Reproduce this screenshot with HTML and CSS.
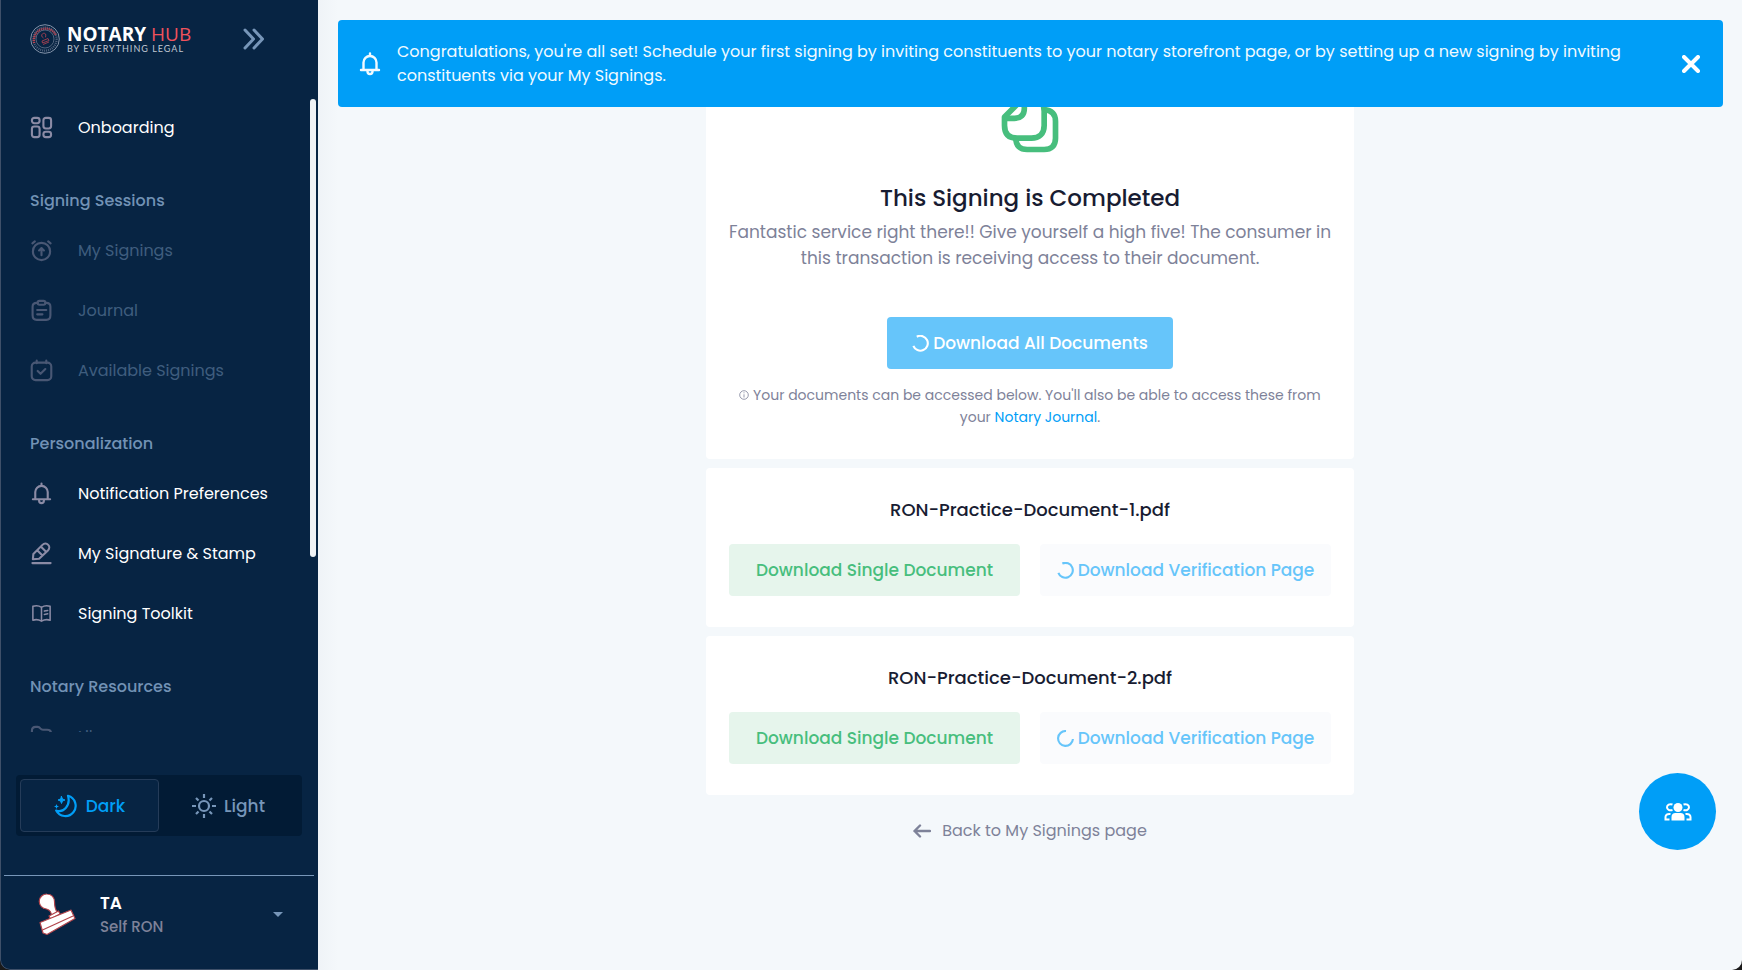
FILE: index.html
```html
<!DOCTYPE html>
<html lang="en">
<head>
    <meta charset="UTF-8">
    <meta name="viewport" content="width=device-width, initial-scale=1.0">
    <title>Notary Hub</title>
    <link rel="stylesheet" href="styles.css">
</head>
<body>
    <div class="app">
        <aside class="sidebar">
            <div class="sidebar-header">
                <a href="#" class="logo">
                    <svg class="logo-seal" viewBox="0 0 30 30" fill="none">
                        <circle cx="15" cy="15" r="14.3" stroke="#8292a8" stroke-width="1"/>
                        <circle cx="15" cy="15" r="11.6" stroke="#50627d" stroke-width="2.2" stroke-dasharray="1 1"/>
                        <path d="M4.2 19A11.6 11.6 0 0 1 25.8 11" stroke="#b84452" stroke-width="2.4" stroke-dasharray="1.2 .8"/>
                        <circle cx="15" cy="15" r="9" stroke="#63738a" stroke-width=".8"/>
                        <path d="M13.500 14c-2-1-2.500-3-1-4.200s3.500-.3 3.300 1.300l-.3 2.200M12 17l6-2.500 1 2-6.500 2.500zM13 20.500l6-2.500" stroke="#b84452" stroke-width=".8"/>
                    </svg>
                    <span class="logo-text">
                        <span class="logo-name"><b>NOTARY</b> <span class="logo-hub">HUB</span></span>
                        <span class="logo-tagline">BY EVERYTHING LEGAL</span>
                    </span>
                </a>
                <button class="collapse-btn" aria-label="Collapse menu">
                    <svg width="22" height="22" viewBox="0 0 22 22" fill="none" stroke="currentColor" stroke-width="3" stroke-linecap="round" stroke-linejoin="round">
                        <path d="M2 2l8.500 9L2 20M11 2l8.500 9-8.500 9"/>
                    </svg>
                </button>
            </div>

            <div class="menu-wrap">
                <nav class="menu">
                    <a href="#" class="menu-item">
                        <svg class="icon" viewBox="0 0 24 24"><rect x="2" y="2" width="8" height="5.500" rx="2.500"/><rect x="14" y="2" width="8" height="11" rx="2.500"/><rect x="2" y="11" width="8" height="11" rx="2.500"/><rect x="14" y="16.500" width="8" height="5.500" rx="2.500"/></svg>
                        Onboarding
                    </a>

                    <h2 class="menu-title">Signing Sessions</h2>
                    <a href="#" class="menu-item disabled">
                        <svg class="icon" viewBox="0 0 24 24"><circle cx="12" cy="13" r="9"/><path d="M12 17v-6M9.500 12L12 9.500l2.500 2.500M2.500 4.500l2.500-2M21.500 4.500l-2.500-2"/></svg>
                        My Signings
                    </a>
                    <a href="#" class="menu-item disabled">
                        <svg class="icon" viewBox="0 0 24 24"><path d="M8 4H7C4 4 2.700 5.500 2.700 8v9c0 3 1.300 4.800 4.300 4.800h10c3 0 4.300-1.800 4.300-4.800V8c0-2.500-1.300-4-4.300-4h-1"/><rect x="8" y="2" width="8" height="4" rx="1.800"/><path d="M7.500 11.500h9.500M7.500 16h5.500"/></svg>
                        Journal
                    </a>
                    <a href="#" class="menu-item disabled">
                        <svg class="icon" viewBox="0 0 24 24"><rect x="1.800" y="3.800" width="20.400" height="18.200" rx="4"/><path d="M7 1.500v3M17 1.500v3M8 12.500l3 3 5-5"/></svg>
                        Available Signings
                    </a>

                    <h2 class="menu-title">Personalization</h2>
                    <a href="#" class="menu-item">
                        <svg class="icon" viewBox="0 0 24 24"><path d="M12 1.500v2M5.500 18v-7.500a6.500 6.500 0 0 1 13 0V18M3 18h18M9.500 18.500v1a2.500 2.500 0 0 0 5 0v-1"/></svg>
                        Notification Preferences
                    </a>
                    <a href="#" class="menu-item">
                        <svg class="icon" viewBox="0 0 24 24"><path d="M3 18l.5-5.500L13 3c2-2 4.500-1.500 6 0s1.500 4-.3 5.800L9.500 17.500zM7.500 8.500l5.500 5.500M11.500 5l5 5M2.500 22h19"/></svg>
                        My Signature &amp; Stamp
                    </a>
                    <a href="#" class="menu-item">
                        <svg class="icon icon-thin" viewBox="0 0 24 24"><path d="M12 5.500C9.500 3.800 6 3.500 3 4.500V19c3-1 6.500-.5 9 1 2.500-1.500 6-2 9-1V4.500c-3-1-6.500-.7-9 1zM12 5.500V20M15 9.500l3.500-.7M15 13l3.500-.7"/></svg>
                        Signing Toolkit
                    </a>

                    <h2 class="menu-title">Notary Resources</h2>
                    <a href="#" class="menu-item disabled">
                        <svg class="icon" viewBox="0 0 24 24"><path d="M2 18V6c0-3 1-4 4-4h2c1.500 0 2 .5 2.700 1.500.8 1 1.300 1.500 2.800 1.500H18c3 0 4 1.500 4 4v9c0 3-1 4-4 4H6c-3 0-4-1-4-4z"/></svg>
                        Library
                    </a>
                </nav>
                <div class="menu-scroll"></div>
            </div>

            <div class="theme-switch">
                <button class="theme-btn active">
                    <svg width="24" height="24" viewBox="0 0 24 24" fill="none" stroke="currentColor" stroke-width="2.200" stroke-linecap="round" stroke-linejoin="round">
                        <path d="M14 1.800A10.300 10.300 0 1 1 2.200 16.500C9 19 17 12 14 1.800z"/>
                        <path d="M7.500 2.500l1 2.500 2.500 1-2.500 1-1 2.500-1-2.500L4 6l2.500-1z" fill="currentColor" stroke-width="1"/>
                        <path d="M2.500 10l.7 1.800L5 12.500l-1.800.7-.7 1.800-.7-1.800L0 12.500l1.800-.7z" fill="currentColor" stroke="none"/>
                    </svg>
                    Dark
                </button>
                <button class="theme-btn">
                    <svg width="24" height="24" viewBox="0 0 24 24" fill="none" stroke="currentColor" stroke-width="2.200">
                        <circle cx="12" cy="12" r="5"/>
                        <path d="M12 0v4M12 20v4M0 12h4M20 12h4M4 4l2.500 2.500M17.500 17.500L20 20M20 4l-2.500 2.500M4 20l2.500-2.500"/>
                    </svg>
                    Light
                </button>
            </div>

            <button class="profile">
                <svg class="avatar" viewBox="0 0 38 44" fill="#fff" stroke="#b2444b" stroke-width="1.200" stroke-linejoin="round">
                    <path d="M9 1a7.500 7.500 0 0 1 7.500 7.500c0 4 .5 8 3 11l-6 3.500c0-4-1.500-6-5-7A7.500 7.500 0 0 1 9 1z"/>
                    <path d="M11 23l9.500-5 1.500 3-9.500 5z"/>
                    <path d="M2 29.500L33 17l4 8.500L9 41.500l-4-1.500z"/>
                    <path d="M4.500 37l30.500-14" fill="none"/>
                </svg>
                <span class="profile-info">
                    <span class="profile-name">TA</span>
                    <span class="profile-role">Self RON</span>
                </span>
                <span class="caret"></span>
            </button>
        </aside>

        <main class="content">
            <div class="toast" role="alert">
                <svg class="toast-icon" viewBox="0 0 24 24"><path d="M12 1.500v2M5.500 18v-7.500a6.500 6.500 0 0 1 13 0V18M3 18h18M9.500 18.500v1a2.500 2.500 0 0 0 5 0v-1"/></svg>
                <p>Congratulations, you're all set! Schedule your first signing by inviting constituents to your notary storefront page, or by setting up a new signing by inviting constituents via your My Signings.</p>
                <button class="toast-close" aria-label="Close">
                    <svg width="18" height="18" viewBox="0 0 18 18" fill="none" stroke="currentColor" stroke-width="4" stroke-linecap="round"><path d="M2 2l14 14M16 2L2 16"/></svg>
                </button>
            </div>

            <section class="card">
                <svg class="done-icon" viewBox="0 0 24 24" fill="none" stroke="currentColor" stroke-width="2" stroke-linejoin="round">
                    <path d="M17 8v4.500c0 3-1.800 4.500-4.500 4.500h-5C4.500 17 3 15.500 3 12.500V9.500L9.500 3h3C15.500 3 17 4.500 17 7.500z"/>
                    <path d="M10 3v3.500c0 2.200-1.200 3.500-3.500 3.500H3"/>
                    <path d="M17 7c2.700 0 4 1.500 4 4v6c0 2.700-1.500 4-4 4h-6c-2.500 0-4-1.300-4-4"/>
                </svg>
                <h1>This Signing is Completed</h1>
                <p class="card-text">Fantastic service right there!! Give yourself a high five! The consumer in this transaction is receiving access to their document.</p>
                <button class="btn btn-primary" disabled>
                    <svg class="spinner" viewBox="0 0 16 16"><path d="M4.500 1.600A7 7 0 1 1 1.300 10.200"/></svg>
                    Download All Documents
                </button>
                <p class="card-note">
                    <svg class="info" viewBox="0 0 10 10"><circle cx="5" cy="5" r="4.300"/><path d="M5 4.300V7.500M5 2.300v1"/></svg>
                    Your documents can be accessed below. You'll also be able to access these from your <a href="#">Notary Journal</a>.
                </p>
            </section>

            <section class="card">
                <h2>RON-Practice-Document-1.pdf</h2>
                <div class="btn-row">
                    <button class="btn btn-success">Download Single Document</button>
                    <button class="btn btn-light" disabled>
                        <svg class="spinner" viewBox="0 0 16 16"><path d="M5 1.400A7 7 0 1 1 1.300 10.200"/></svg>
                        Download Verification Page
                    </button>
                </div>
            </section>

            <section class="card">
                <h2>RON-Practice-Document-2.pdf</h2>
                <div class="btn-row">
                    <button class="btn btn-success">Download Single Document</button>
                    <button class="btn btn-light" disabled>
                        <svg class="spinner" viewBox="0 0 16 16"><path d="M8.500 1A7 7 0 1 0 15 8.500"/></svg>
                        Download Verification Page
                    </button>
                </div>
            </section>

            <a href="#" class="back-link">
                <svg width="18" height="14" viewBox="0 0 18 14" fill="none" stroke="currentColor" stroke-width="2.400" stroke-linecap="round" stroke-linejoin="round"><path d="M17 7H1.500M7 1.500L1.500 7 7 12.500"/></svg>
                Back to My Signings page
            </a>

            <button class="chat-btn" aria-label="Participants">
                <svg width="28" height="20" viewBox="0 0 28 20" fill="#fff">
                    <circle cx="14" cy="5.500" r="4.500"/>
                    <path d="M7.500 18.500V15c0-2.500 1.500-4 4-4h5c2.500 0 4 1.500 4 4v3.500z"/>
                    <g fill="none" stroke="#fff" stroke-width="2">
                        <path d="M8.500 2.500C5.500 1.500 3 3 3 5.300S5.500 9 8.500 8M19.500 2.500c3-1 5.500.5 5.500 2.800S22.500 9 19.500 8"/>
                        <path d="M6.500 12C3 11.500 1.500 13 1.500 15v2.500h4M21.500 12c3.500-.5 5 1 5 3v2.500h-4"/>
                    </g>
                </svg>
            </button>
        </main>
    </div>
</body>
</html>
```
FILE: styles.css
```css
* {
    box-sizing: border-box;
}
body {
    margin: 0;
    background-color: #1a1a1a;
    font-family: Poppins, Inter, sans-serif;
    font-size: 16px;
    color: #181c32;
}
h1, h2, p {
    margin: 0;
}
a {
    color: #009ef7;
    text-decoration: none;
}
button {
    border: none;
    padding: 0;
    background: none;
    font-family: inherit;
    font-size: inherit;
    cursor: pointer;
}
svg {
    display: block;
    flex-shrink: 0;
}
.app {
    display: flex;
    min-height: 100vh;
    border-radius: 0 0 10px 10px;
    overflow: hidden;
}

/* Sidebar */
.sidebar {
    display: flex;
    flex-direction: column;
    flex-shrink: 0;
    width: 318px;
    height: 100vh;
    background-color: #072443;
    border-left: 1px solid #3f5069;
    border-bottom: 1px solid #3f5069;
    border-bottom-left-radius: 10px;
}
.sidebar-header {
    display: flex;
    align-items: center;
    justify-content: space-between;
    height: 77px;
    padding: 0 53px 0 29px;
}
.logo {
    display: flex;
    align-items: center;
    gap: 7px;
    color: #fff;
}
.logo-seal {
    width: 30px;
    height: 30px;
}
.logo-text {
    display: flex;
    flex-direction: column;
    font-family: "Open Sans", sans-serif;
}
.logo-name {
    font-size: 19px;
    line-height: 20px;
    white-space: nowrap;
}
.logo-hub {
    font-weight: 500;
    color: #f0525c;
}
.logo-tagline {
    font-family: Lato, sans-serif;
    font-size: 9px;
    line-height: 10px;
    letter-spacing: 1px;
    color: #c0c8d3;
}
.collapse-btn {
    color: #7796b9;
}
.menu-wrap {
    position: relative;
    flex: 1;
    min-height: 0;
    margin-top: 20px;
    overflow: hidden;
}
.menu-scroll {
    position: absolute;
    top: 2px;
    right: 2px;
    width: 6px;
    height: 458px;
    border-radius: 3px;
    background-color: #eff2f5;
}
.menu-item {
    display: flex;
    align-items: center;
    gap: 25px;
    height: 60px;
    padding-left: 29px;
    color: #fff;
}
.menu-item.disabled {
    opacity: 0.5;
    color: #7796b9;
}
.menu-title {
    margin: 32px 0 7px;
    padding-left: 29px;
    font-size: 16px;
    font-weight: 500;
    line-height: 24px;
    color: #7292b5;
}
.icon {
    width: 23px;
    height: 23px;
    fill: none;
    stroke: #8b8ba5;
    stroke-width: 2.2;
    stroke-linecap: round;
    stroke-linejoin: round;
}
.icon-thin {
    stroke-width: 1.6;
}
.theme-switch {
    display: flex;
    margin: 43px 16px 39px 15px;
    padding: 4px;
    border-radius: 4px;
    background-color: #021b35;
}
.theme-btn {
    display: flex;
    flex: 1;
    align-items: center;
    justify-content: center;
    gap: 8px;
    height: 53px;
    border: 1px solid transparent;
    border-radius: 4px;
    font-size: 17px;
    font-weight: 500;
    color: #7796b9;
}
.theme-btn.active {
    border-color: #253c59;
    background-color: #072443;
    color: #009ef7;
}
.profile {
    display: flex;
    align-items: center;
    height: 94px;
    margin: 0 4px 0 3px;
    padding: 0 31px 16px 34px;
    border-top: 1px solid #7796b9;
    text-align: left;
}
.avatar {
    width: 38px;
    height: 44px;
}
.profile-info {
    display: flex;
    flex: 1;
    flex-direction: column;
    margin-left: 24px;
    line-height: 24px;
}
.profile-name {
    font-size: 17px;
    font-weight: 600;
    color: #fff;
}
.profile-role {
    font-size: 15px;
    font-weight: 500;
    color: #7e8299;
}
.caret {
    border: 5px solid transparent;
    border-top-color: #7796b9;
    border-bottom: none;
}

/* Content */
.content {
    position: relative;
    display: flex;
    flex: 1;
    flex-direction: column;
    align-items: center;
    gap: 9px;
    padding: 60px 20px 0;
    background: linear-gradient(to right, #eff3f7, #f4f8fb 20px);
}
.toast {
    position: absolute;
    top: 20px;
    left: 20px;
    right: 19px;
    display: flex;
    align-items: center;
    padding: 20px 23px 19px 20px;
    border-radius: 4px;
    background-color: #009ef7;
    line-height: 24px;
    color: #f1faff;
}
.toast p {
    flex: 1;
    margin: 0 48px 0 15px;
}
.toast-icon {
    width: 24px;
    height: 24px;
    fill: none;
    stroke: currentColor;
    stroke-width: 2.4;
    stroke-linecap: round;
}
.toast-close {
    color: #fff;
}
.card {
    width: 100%;
    max-width: 648px;
    padding: 30px 18px 31px;
    border-radius: 4px;
    background-color: #fff;
    text-align: center;
}
.done-icon {
    width: 68px;
    height: 68px;
    margin: 0 auto 22px;
    color: #47be7d;
}
.card h1 {
    margin-bottom: 3px;
    font-size: 23px;
    font-weight: 500;
    line-height: 36px;
}
.card h2 {
    margin-bottom: 22px;
    font-size: 18px;
    font-weight: 500;
    line-height: 24px;
}
.card-text {
    margin-bottom: 46px;
    font-size: 17px;
    line-height: 26px;
    color: #7e8299;
}
.card-note {
    margin-top: 15px;
    font-size: 14px;
    line-height: 22px;
    color: #7e8299;
}
.info {
    display: inline-block;
    width: 10px;
    height: 10px;
    fill: none;
    stroke: currentColor;
    stroke-width: 0.8;
}
.btn {
    display: inline-flex;
    align-items: center;
    justify-content: center;
    gap: 4px;
    height: 52px;
    border-radius: 4px;
    font-size: 17px;
    font-weight: 500;
    white-space: nowrap;
}
.btn-primary {
    padding: 0 25px;
    background-color: #66c5fa;
    color: #fff;
}
.btn-row {
    display: grid;
    grid-template-columns: 1fr 1fr;
    gap: 20px;
    padding: 0 5px;
}
.btn-success {
    background-color: #e6f5ec;
    color: #47be7d;
}
.btn-light {
    background-color: #fafbfd;
    color: #66c5fa;
}
.spinner {
    width: 17px;
    height: 17px;
    fill: none;
    stroke: currentColor;
    stroke-width: 2;
}
.back-link {
    display: flex;
    align-items: center;
    gap: 11px;
    margin-top: 15px;
    line-height: 24px;
    color: #7e8299;
}
.chat-btn {
    position: absolute;
    right: 26px;
    bottom: 120px;
    display: flex;
    align-items: center;
    justify-content: center;
    width: 77px;
    height: 77px;
    border-radius: 50%;
    background-color: #009ef7;
}
```
